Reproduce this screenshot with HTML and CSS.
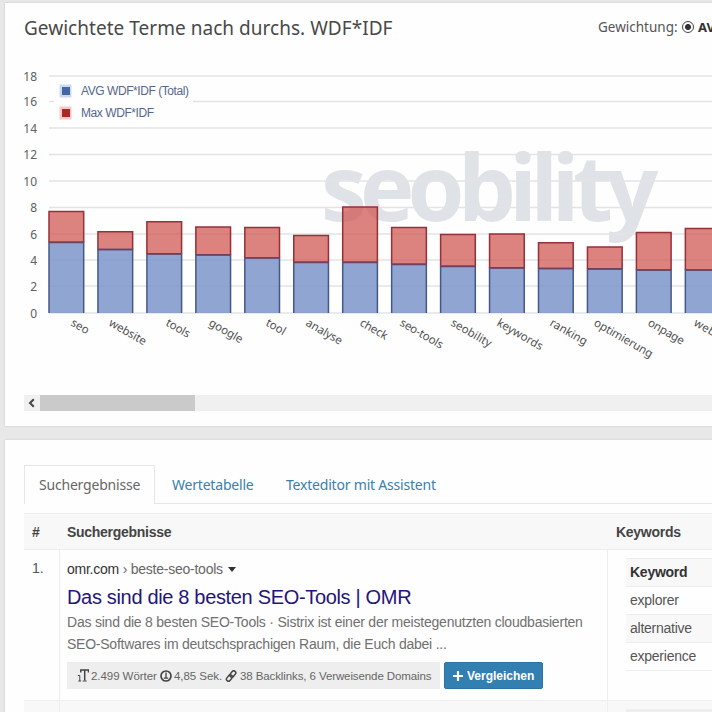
FILE: index.html
```
<!DOCTYPE html>
<html lang="de">
<head>
    <meta charset="UTF-8">
    <meta name="viewport" content="width=device-width, initial-scale=1.0">
    <title>WDF*IDF Analyse</title>
    <link rel="stylesheet" href="styles.css">
</head>
<body>
    <!-- Chart -->
    <section class="panel chart-panel">
        <div class="panel-head">
            <h2 class="panel-title">Gewichtete Terme nach durchs. WDF*IDF</h2>
            <div class="weighting">
                <span class="weighting-label">Gewichtung:</span>
                <span class="radio"></span>
                <b>AVG</b>
            </div>
        </div>

        <svg class="chart" width="707" height="320" viewBox="5 60 707 320">
            <text class="watermark" x="321" y="221">seobility</text>
            <g id="grid"></g>
            <rect x="54" y="80" width="139" height="43" fill="#fefefe"/>
            <g class="legend">
                <rect x="59.5" y="84.5" width="12" height="13" fill="#cbd9ef"/>
                <rect x="62" y="87" width="8" height="8" fill="#4468a2"/>
                <text x="81" y="95" textLength="108">AVG WDF*IDF (Total)</text>
                <rect x="59.5" y="106.5" width="12" height="13" fill="#f5c9c6"/>
                <rect x="62" y="109" width="8" height="8" fill="#a52a25"/>
                <text x="81" y="117" textLength="73">Max WDF*IDF</text>
            </g>
            <g id="bars"></g>
            <g id="labels"></g>
        </svg>

        <div class="scrollbar">
            <svg class="scroll-arrow" width="16" height="16" viewBox="0 0 16 16"><path d="M9.8 4.2 6 8l3.8 3.8" fill="none" stroke="#444" stroke-width="2"/></svg>
            <div class="scroll-thumb"></div>
        </div>
    </section>

    <!-- Results -->
    <section class="panel results-panel">
        <nav class="tabs">
            <a class="tab active">Suchergebnisse</a>
            <a class="tab">Wertetabelle</a>
            <a class="tab">Texteditor mit Assistent</a>
        </nav>

        <div class="results">
            <div class="row head">
                <div class="cell num">#</div>
                <div class="cell">Suchergebnisse</div>
                <div class="cell">Keywords</div>
            </div>
            <div class="row">
                <div class="cell num">1.</div>
                <div class="cell result">
                    <div class="result-url"><span class="domain">omr.com</span> › beste-seo-tools <i class="caret"></i></div>
                    <div class="result-title">Das sind die 8 besten SEO-Tools | OMR</div>
                    <div class="result-text"><span class="line1">Das sind die 8 besten SEO-Tools · Sistrix ist einer der meistegenutzten cloudbasierten</span><br><span class="line2">SEO-Softwares im deutschsprachigen Raum, die Euch dabei ...</span></div>
                    <div class="result-meta">
                        <div class="stats">
                            <svg width="12" height="13" viewBox="0 0 12 13" fill="none" stroke="#444"><path d="M3.8 3.5V1h7.7v2.5M7.7 1v10.5" stroke-width="1.5"/><path d="M5.7 12h4M.8 6.5h2v5.5M1.3 12h2.8" stroke-width="1"/></svg>
                            <span class="words">2.499 Wörter</span>
                            <svg width="12" height="12" viewBox="0 0 12 12" fill="none" stroke="#444"><circle cx="6" cy="6" r="5" stroke-width="1.7"/><path d="M6 2.5v5.5M3.8 8.2h4.4" stroke-width="1.3"/></svg>
                            <span class="secs">4,85 Sek.</span>
                            <svg width="12" height="12" viewBox="0 0 12 12" fill="none" stroke="#444" stroke-width="1.5"><rect x="5.8" y=".5" width="4" height="7" rx="2" transform="rotate(40 7.8 4)"/><rect x="2.4" y="4.5" width="4" height="7" rx="2" transform="rotate(40 4.4 8)"/></svg>
                            <span class="links">38 Backlinks, 6 Verweisende Domains</span>
                        </div>
                        <button class="compare"><svg width="10" height="10" viewBox="0 0 10 10"><path d="M5 0v10M0 5h10" stroke="#fff" stroke-width="2.2"/></svg>Vergleichen</button>
                    </div>
                </div>
                <div class="cell keyword-cell">
                    <div class="keywords">
                        <div class="kw kw-head">Keyword</div>
                        <div class="kw">explorer</div>
                        <div class="kw shaded">alternative</div>
                        <div class="kw">experience</div>
                    </div>
                </div>
            </div>
            <div class="row next">
                <div class="cell num"></div>
                <div class="cell result"></div>
                <div class="cell keyword-cell"><div class="keywords"></div></div>
            </div>
        </div>
    </section>

    <script src="chart.js"></script>
</body>
</html>
```
FILE: styles.css
```
* {
    box-sizing: border-box;
}

body {
    margin: 0;
    padding: 3px 0 0 5px;
    height: 712px;
    overflow: hidden;
    background: #e8e8e8;
    font-family: "Liberation Sans", Arial, sans-serif;
    color: #555;
}

.panel {
    background: #fefefe;
    box-shadow: 0 0 2px rgba(0, 0, 0, 0.15);
}

.chart-panel {
    height: 423px;
    margin-bottom: 14px;
    overflow: hidden;
}

.results-panel {
    height: 272px;
    padding: 25px 0 0 19px;
    overflow: hidden;
}

.panel-head {
    display: flex;
    height: 57px;
    padding: 11px 0 0 19px;
    white-space: nowrap;
}

.panel-title {
    width: 574px;
    flex-shrink: 0;
    margin: 0;
    color: #494949;
    font: 400 19px/29px "Noto Sans", sans-serif;
    letter-spacing: 0.03px;
}

.weighting {
    display: flex;
    align-items: center;
    height: 26px;
    gap: 4px;
    font: 13.5px "Noto Sans", sans-serif;
}

.weighting-label {
    width: 80px;
}

.weighting b {
    color: #333;
    font-size: 13px;
}

.radio {
    flex-shrink: 0;
    width: 12px;
    height: 12px;
    border: 1px solid #444;
    border-radius: 50%;
    background: radial-gradient(circle, #333 0 2.6px, #fff 3.4px);
}

/* Chart */
.chart {
    display: block;
    font-family: "Noto Sans", sans-serif;
}

.grid-line {
    stroke: #e2e3e4;
    stroke-width: 1.4;
}

.axis-text {
    fill: #606060;
    font-size: 12px;
    text-anchor: end;
}

.legend text {
    fill: #55688c;
    font: 12px "Liberation Sans", Arial, sans-serif;
}

.watermark {
    fill: #dfe3e7;
    font: 700 92px "Open Sans", sans-serif;
    letter-spacing: -6.8px;
}

.bar-label {
    fill: #505050;
    font-size: 11.5px;
}

.bar-max {
    fill: rgba(208, 88, 84, 0.75);
    stroke: #963039;
    stroke-width: 1.5;
}

.bar-avg {
    fill: rgba(126, 149, 203, 0.85);
    stroke: #465888;
    stroke-width: 1.5;
}

.bar-divider {
    stroke: #70405f;
    stroke-width: 1.7;
}

.scrollbar {
    display: flex;
    height: 16px;
    margin: 15px 0 0 19px;
    background: #f0f0f0;
}

.scroll-thumb {
    width: 155px;
    background: #cacaca;
}

/* Tabs */
.tabs {
    display: flex;
    height: 39px;
    border-bottom: 1px solid #e6e6e6;
    font: 14px "Noto Sans", sans-serif;
    letter-spacing: -0.2px;
    white-space: nowrap;
}

.tab {
    height: 39px;
    padding: 10px 0 0 15px;
    color: #3c7fac;
}

.tab.active {
    width: 131px;
    margin-right: 2px;
    padding: 9px 0 0 14px;
    border: 1px solid #e6e6e6;
    border-bottom: 0;
    background: #fefefe;
    color: #666;
}

.tab:nth-child(2) {
    width: 114px;
}

/* Result table */
.results {
    margin-top: 9px;
    font-size: 14px;
}

.row {
    display: grid;
    grid-template-columns: 35px 549px 104px;
    height: 150px;
    white-space: nowrap;
}

.row.head {
    height: 37px;
    border: solid #ededed;
    border-width: 1px 0;
    background: #f8f8f8;
    color: #444;
    font-weight: bold;
    line-height: 36px;
    letter-spacing: -0.28px;
}

.head .cell {
    padding-left: 8px;
}

.row.next {
    height: 20px;
    background: #f8f8f8;
    border-top: 1px solid #eee;
}

.cell.num {
    padding: 10px 0 0 8px;
}

.head .cell.num {
    padding-top: 0;
}

.result {
    padding: 9px 0 0 7px;
    border: solid #eee;
    border-width: 0 1px;
}

.result-url {
    height: 20px;
    line-height: 20px;
    letter-spacing: -0.24px;
    color: #666;
}

.domain {
    color: #333;
}

.caret {
    display: inline-block;
    margin: 0 0 2px 1px;
    border: 4px solid transparent;
    border-top: 5px solid #333;
    border-bottom: 0;
}

.result-title {
    height: 33px;
    font-size: 20px;
    line-height: 36px;
    letter-spacing: -0.33px;
    color: #24157a;
}

.result-text {
    font-size: 14px;
    line-height: 21.5px;
    color: #707070;
}

.line1 {
    letter-spacing: -0.22px;
}

.line2 {
    letter-spacing: -0.24px;
}

.result-meta {
    display: flex;
    gap: 4px;
    margin-top: 7px;
}

.stats {
    display: flex;
    align-items: center;
    width: 373px;
    height: 27px;
    padding-left: 10px;
    gap: 2px;
    background: #eeeeee;
    font-size: 11.5px;
    letter-spacing: -0.06px;
    color: #666;
}

.stats svg {
    flex-shrink: 0;
}

.words {
    width: 67px;
}

.secs {
    width: 49px;
}

.links {
    margin-left: 1px;
    letter-spacing: -0.1px;
}

.compare {
    display: flex;
    align-items: center;
    width: 99px;
    height: 27px;
    padding: 0 0 0 8px;
    gap: 4px;
    border: 1px solid #2b73a3;
    border-radius: 2px;
    background: #337fb1;
    color: #fff;
    font: bold 12px "Liberation Sans", Arial, sans-serif;
}

.keywords {
    margin: 8px 0 0 18px;
    border-top: 1px solid #eee;
}

.kw {
    height: 28px;
    padding-left: 4px;
    border-bottom: 1px solid #eee;
    line-height: 27px;
    letter-spacing: -0.25px;
}

.kw-head {
    background: #f8f8f8;
    color: #333;
    font-weight: bold;
}

.shaded {
    background: #f8f8f8;
}

.next .keywords {
    height: 12px;
    background: #eee;
}
```
FILE: chart.js
```
const gridY = [313, 286, 260, 234, 207.5, 181, 154.5, 128, 101.5, 76];
// label, top of max, top of avg, label x, label width
const terms = [
    ['seo', 211.5, 242.3, 70, 19],
    ['website', 231.8, 249.5, 108, 41],
    ['tools', 221.8, 253.8, 165, 26],
    ['google', 227, 254.8, 208, 37],
    ['tool', 227.5, 257.8, 265, 21],
    ['analyse', 235.5, 262.3, 305, 40],
    ['check', 207, 262.3, 359, 30],
    ['seo-tools', 227.5, 264.3, 399, 48],
    ['seobility', 234.5, 266.3, 450, 45],
    ['keywords', 234, 267.8, 496, 51],
    ['ranking', 242.7, 268.5, 549, 41],
    ['optimierung', 247, 268.9, 593, 66],
    ['onpage', 232.5, 270, 647, 40],
    ['webseite', 228.5, 270, 693, 50]
];

document.getElementById('grid').innerHTML = gridY.map((y, i) =>
    `<line class="grid-line" x1="49" x2="712" y1="${y}" y2="${y}"/>` +
    `<text class="axis-text" x="37" y="${y + 4.5}">${i * 2}</text>`).join('');

document.getElementById('bars').innerHTML = terms.map(([name, max, avg], i) => {
    const x = 49 + i * 48.95;
    return `<path class="bar-max" d="M${x} ${avg}V${max}h34.7V${avg}"/>` +
        `<path class="bar-avg" d="M${x} 313V${avg}h34.7V313"/>` +
        `<line class="bar-divider" x1="${x}" x2="${x + 34.7}" y1="${avg}" y2="${avg}"/>`;
}).join('');

document.getElementById('labels').innerHTML = terms.map(([name, max, avg, x, w]) =>
    `<text class="bar-label" x="${x}" y="325" textLength="${w}" transform="rotate(30 ${x} 325)">${name}</text>`).join('');
```
